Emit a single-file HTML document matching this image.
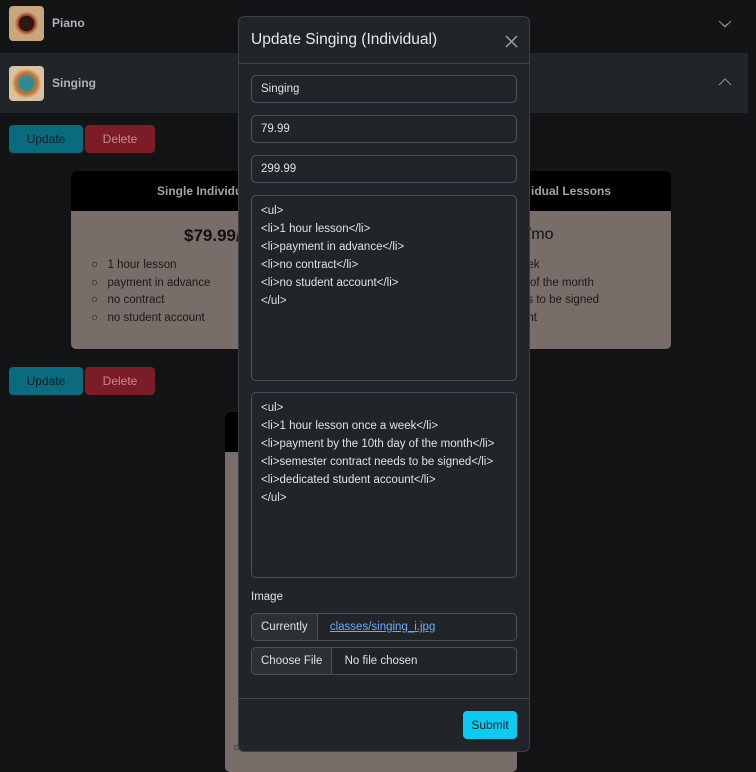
<!DOCTYPE html>
<html><head><meta charset="utf-8"><style>
*{box-sizing:border-box;margin:0;padding:0}
body{width:756px;height:760px;overflow:hidden;background:#131416;font-family:"Liberation Sans",sans-serif;color:#dee2e6;position:relative;font-size:12px}
.abs{position:absolute}
.acc{left:0;width:748px;height:53px}
.thumb{width:35px;height:35px;border-radius:4px;background:#c9a77c;left:9px;top:9px}
.atitle{left:52px;font-weight:bold;font-size:12px;color:#aeb3b8}
.btn{height:28px;border-radius:4px;font-size:12px;text-align:center;line-height:28px}
.upd{background:#0a6a7e;color:#0b1c22;width:74px;left:9px}
.del{background:#7c1c27;color:#c88a90;width:70px;left:85px}
.card{background:#786d68;border-radius:5px;overflow:hidden}
.chead{background:#000;height:40px;color:#a9a09b;font-weight:bold;font-size:12px;text-align:center;line-height:40px}
.li{color:#1c1a19;font-size:11.5px}
.modal{left:238px;top:16px;width:292px;height:736px;background:#212529;border:1px solid #3a3f45;border-radius:6px}
.inp{position:absolute;left:12px;width:266px;border:1px solid #495057;border-radius:5px;background:#212529;color:#dee2e6;font-size:11.5px;padding-left:9px}
.ta{line-height:18px;padding-top:6px}
</style></head><body>
<div class="abs acc" style="top:0;background:#131416"></div>
<div class="abs thumb" style="top:6px;background:radial-gradient(circle,#2a1a16 30%,#a8301f 32%,#c9a77c 48%)"></div>
<div class="abs atitle" style="top:16px">Piano</div>
<div class="abs" style="left:719px;top:14px;color:#8a8f94;font-size:14px">&#8964;</div>
<div class="abs acc" style="top:53px;height:60px;background:#212428"></div>
<div class="abs thumb" style="top:66px;background:radial-gradient(circle,#2f8a94 25%,#d0772f 45%,#d8c2a0 60%)"></div>
<div class="abs atitle" style="top:76px">Singing</div>
<svg class="abs" style="left:718px;top:78px" width="14" height="8"><path d="M1 7L7 1L13 7" stroke="#8a8f94" fill="none"/></svg>
<svg class="abs" style="left:718px;top:20px" width="14" height="8"><path d="M1 1L7 7L13 1" stroke="#8a8f94" fill="none"/></svg>

<div class="abs btn upd" style="top:125px">Update</div>
<div class="abs btn del" style="top:125px">Delete</div>

<div class="abs card" style="left:71px;top:171px;width:600px;height:178px">
 <div class="chead" style="text-align:left;padding-left:86px">Single Individual</div>
 <div class="abs" style="left:113px;top:55px;font-size:17px;font-weight:bold;color:#111">$79.99/h</div>
 <div class="abs" style="left:438px;top:55px;font-size:16px;color:#111"><b>99</b>/mo</div>
 <div class="abs li" style="left:20px;top:86px;line-height:17.5px">
  <div>○&nbsp;&nbsp;&nbsp;1 hour lesson</div><div>○&nbsp;&nbsp;&nbsp;payment in advance</div><div>○&nbsp;&nbsp;&nbsp;no contract</div><div>○&nbsp;&nbsp;&nbsp;no student account</div></div>
 <div class="chead abs" style="left:460px;top:0;background:none;width:120px;text-align:left">idual Lessons</div>
 <div class="abs li" style="left:450px;top:86px;line-height:17.5px"><div>eek</div><div>y of the month</div><div>ds to be signed</div><div>unt</div></div>
</div>

<div class="abs btn upd" style="top:367px">Update</div>
<div class="abs btn del" style="top:367px">Delete</div>

<div class="abs card" style="left:225px;top:412px;width:292px;height:360px">
 <div class="chead"></div>
 <div class="abs li" style="left:8px;top:330px">○&nbsp;&nbsp;&nbsp;adults</div>
</div>

<div class="abs modal">
 <div class="abs" style="left:12px;top:14px;font-size:15.5px;color:#e6e8ea">Update Singing (Individual)</div>
 <svg class="abs" style="left:266px;top:18px" width="13" height="13"><path d="M1 1L12 12M12 1L1 12" stroke="#9aa0a6" stroke-width="1.5"/></svg>
 <div class="abs" style="left:0;top:46px;width:290px;border-top:1px solid #41464c"></div>
 <div class="inp" style="top:58px;height:28px;line-height:26px">Singing</div>
 <div class="inp" style="top:98px;height:28px;line-height:26px">79.99</div>
 <div class="inp" style="top:138px;height:28px;line-height:26px">299.99</div>
 <div class="inp ta" style="top:178px;height:186px">&lt;ul&gt;<br>&lt;li&gt;1 hour lesson&lt;/li&gt;<br>&lt;li&gt;payment in advance&lt;/li&gt;<br>&lt;li&gt;no contract&lt;/li&gt;<br>&lt;li&gt;no student account&lt;/li&gt;<br>&lt;/ul&gt;</div>
 <div class="inp ta" style="top:375px;height:186px">&lt;ul&gt;<br>&lt;li&gt;1 hour lesson once a week&lt;/li&gt;<br>&lt;li&gt;payment by the 10th day of the month&lt;/li&gt;<br>&lt;li&gt;semester contract needs to be signed&lt;/li&gt;<br>&lt;li&gt;dedicated student account&lt;/li&gt;<br>&lt;/ul&gt;</div>
 <div class="abs" style="left:12px;top:574px;font-size:11.5px;color:#dee2e6">Image</div>
 <div class="inp" style="top:596px;height:28px;line-height:26px;padding:0;overflow:hidden">
  <span style="display:inline-block;background:#2b3035;border-right:1px solid #495057;padding:0 9px;height:26px">Currently</span>
  <span style="color:#6ea8fe;text-decoration:underline;margin-left:9px">classes/singing_i.jpg</span></div>
 <div class="inp" style="top:630px;height:28px;line-height:26px;padding:0;overflow:hidden">
  <span style="display:inline-block;background:#2b3035;border-right:1px solid #495057;padding:0 9px;height:26px">Choose File</span>
  <span style="margin-left:9px">No file chosen</span></div>
 <div class="abs" style="left:0;top:681px;width:290px;border-top:1px solid #41464c"></div>
 <div class="abs btn" style="left:224px;top:694px;width:54px;height:28px;background:#0dcaf0;color:#0b1c22">Submit</div>
</div>
</body></html>
